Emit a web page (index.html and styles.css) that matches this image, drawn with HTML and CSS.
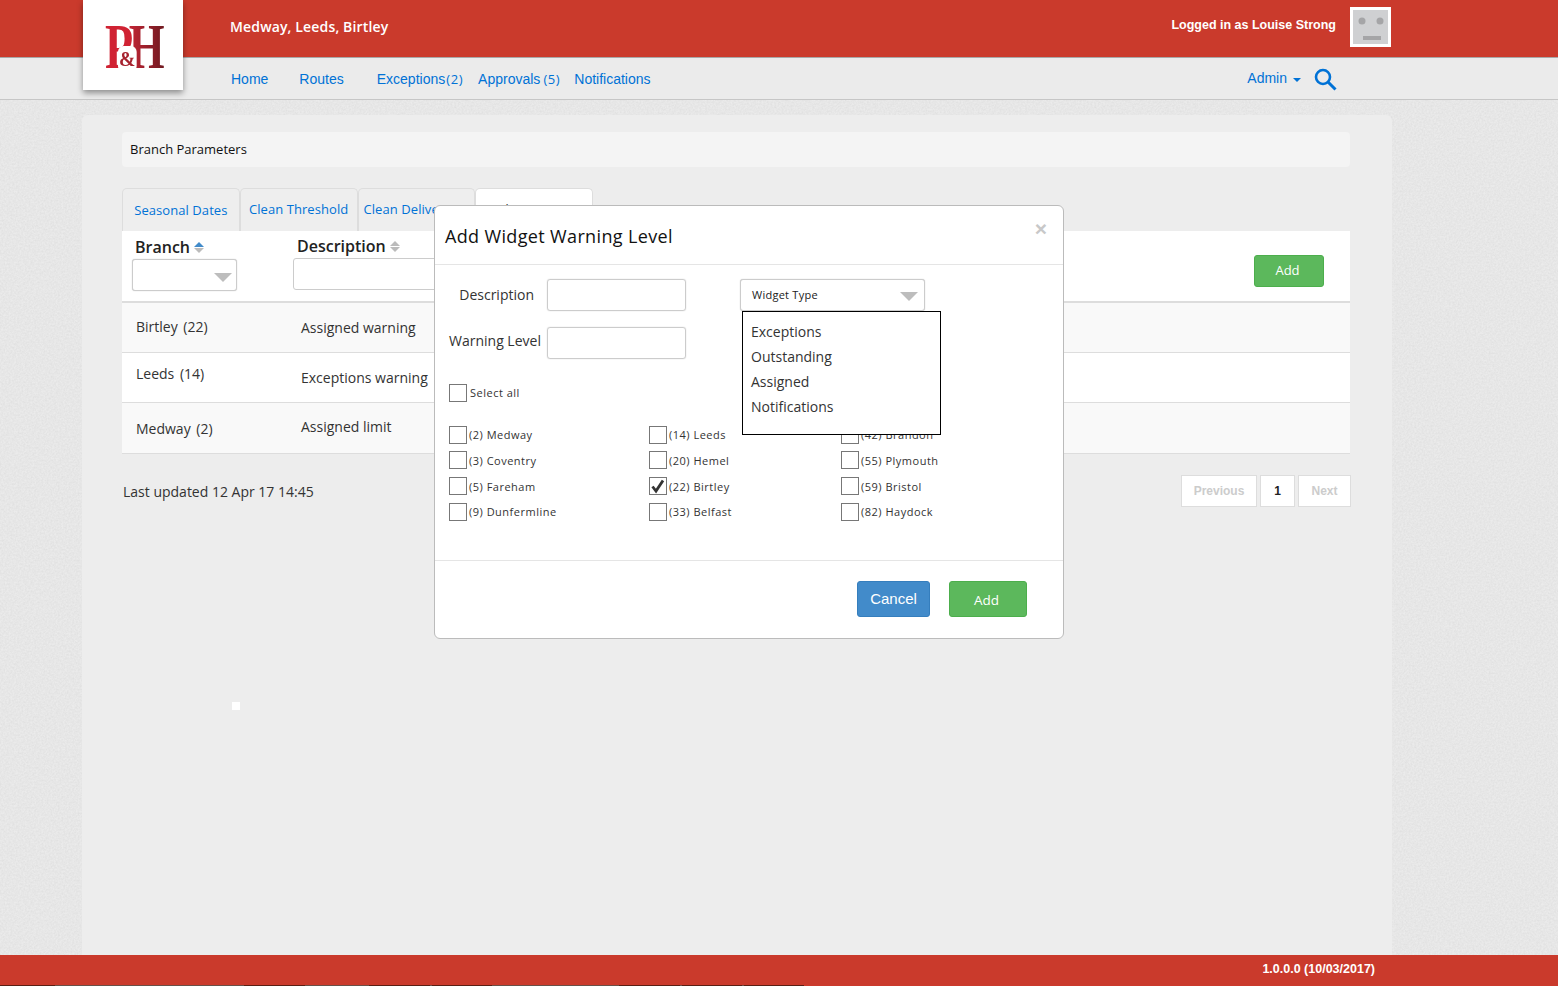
FILE: index.html
```html
<!DOCTYPE html>
<html lang="en">
<head>
<meta charset="utf-8">
<title>Branch Parameters</title>
<link rel="stylesheet" href="styles.css">
</head>
<body>
<div class="page">
  <header class="topbar">
    <div class="logo"><div class="logo-mark"><span class="logo-p">P</span><span class="amp">&amp;</span><span class="logo-h">H</span></div></div>
    <div class="branches">Medway, Leeds, Birtley</div>
    <div class="user">Logged in as Louise Strong</div>
    <div class="avatar">
      <svg width="35" height="34" viewBox="0 0 35 34"><rect width="35" height="34" fill="#cfd0d2"/><circle cx="9" cy="11" r="3.5" fill="#a5a5a7"/><circle cx="27" cy="11" r="3.5" fill="#a5a5a7"/><rect x="10" y="26" width="18" height="4" fill="#a5a5a7"/></svg>
    </div>
  </header>
  <nav class="navbar">
    <a class="nav-link home">Home</a>
    <a class="nav-link routes">Routes</a>
    <a class="nav-link exc">Exceptions<span class="count">(2)</span></a>
    <a class="nav-link appr">Approvals<span class="count gap">(5)</span></a>
    <a class="nav-link">Notifications</a>
    <div class="nav-right">
      <a class="nav-link admin">Admin</a><span class="caret"></span>
      <svg class="search" width="23" height="23" viewBox="0 0 23 23"><circle cx="9" cy="9" r="7" fill="none" stroke="#0072d6" stroke-width="2.6"/><path d="M14 14l7.500 7.500" stroke="#0072d6" stroke-width="3" fill="none"/></svg>
    </div>
  </nav>
  <main class="stage">
    <section class="panel">
      <div class="crumb">Branch Parameters</div>
      <div class="tabs">
        <a class="tab first">Seasonal Dates</a>
        <a class="tab">Clean Threshold</a>
        <a class="tab third">Clean Delivery</a>
        <a class="tab active">Widget Warning</a>
      </div>
      <div class="table">
        <div class="thead">
          <div class="th branch-col">
            <div class="th-title">Branch<span class="sort"><i class="up on"></i><i class="down"></i></span></div>
            <div class="select narrow"><span class="arrow"></span></div>
          </div>
          <div class="th desc-col">
            <div class="th-title">Description<span class="sort"><i class="up"></i><i class="down"></i></span></div>
            <div class="text-filter"></div>
          </div>
          <button class="btn green table-add">Add</button>
        </div>
        <div class="row odd"><span class="c1 t1">Birtley (22)</span><span class="c2 t2">Assigned warning</span></div>
        <div class="row"><span class="c1 t3">Leeds (14)</span><span class="c2 t4">Exceptions warning</span></div>
        <div class="row odd last"><span class="c1 t5">Medway (2)</span><span class="c2 t6">Assigned limit</span></div>
      </div>
      <div class="tfoot">
        <div class="updated">Last updated 12 Apr 17 14:45</div>
        <div class="pager">
          <a class="pg off prev">Previous</a><a class="pg cur">1</a><a class="pg off next">Next</a>
        </div>
      </div>
    </section>
    <span class="speck"></span>
    <div class="modal">
      <div class="modal-head">
        <h2>Add Widget Warning Level</h2>
        <span class="close">×</span>
      </div>
      <div class="modal-body">
        <div class="form-top">
          <div class="fields">
            <label class="field"><span class="lbl d">Description</span><span class="input"></span></label>
            <label class="field"><span class="lbl w">Warning Level</span><span class="input"></span></label>
          </div>
          <div class="select wide">Widget Type<span class="arrow"></span>
            <div class="menu">
              <div>Exceptions</div><div>Outstanding</div><div>Assigned</div><div>Notifications</div>
            </div>
          </div>
        </div>
        <div class="selall"><span class="box"></span>Select all</div>
        <div class="checks">
          <div class="chk"><span class="box"></span>(2) Medway</div>
          <div class="chk"><span class="box"></span>(14) Leeds</div>
          <div class="chk"><span class="box"></span>(42) Brandon</div>
          <div class="chk"><span class="box"></span>(3) Coventry</div>
          <div class="chk"><span class="box"></span>(20) Hemel</div>
          <div class="chk"><span class="box"></span>(55) Plymouth</div>
          <div class="chk"><span class="box"></span>(5) Fareham</div>
          <div class="chk"><span class="box"><svg width="16" height="16" viewBox="0 0 16 16"><path d="M2.500 8.500l3.500 4.500L13 2.500" fill="none" stroke="#333" stroke-width="2.800"/></svg></span>(22) Birtley</div>
          <div class="chk"><span class="box"></span>(59) Bristol</div>
          <div class="chk"><span class="box"></span>(9) Dunfermline</div>
          <div class="chk"><span class="box"></span>(33) Belfast</div>
          <div class="chk"><span class="box"></span>(82) Haydock</div>
        </div>
      </div>
      <div class="modal-foot">
        <button class="btn blue">Cancel</button>
        <button class="btn green big">Add</button>
      </div>
    </div>
  </main>
  <footer class="footer">1.0.0.0 (10/03/2017)</footer>
  <div class="footer-edge"></div>
</div>
</body>
</html>
```
FILE: styles.css
```css
* { box-sizing: border-box; }
html, body { margin: 0; height: 100%; }
body { font-family: "Open Sans", sans-serif; font-size: 13px; color: #222; background-color: #ebebeb; background-image: url("data:image/svg+xml,%3Csvg xmlns='http://www.w3.org/2000/svg' width='320' height='320'%3E%3Cfilter id='n'%3E%3CfeTurbulence type='fractalNoise' baseFrequency='.55' numOctaves='3' stitchTiles='stitch'/%3E%3CfeColorMatrix values='0 0 0 0 .45 0 0 0 0 .45 0 0 0 0 .45 .3 0 0 0 -.07'/%3E%3C/filter%3E%3Crect width='320' height='320' filter='url(%23n)'/%3E%3C/svg%3E"); overflow: hidden; }
a { color: #0072d6; text-decoration: none; }
.page { height: 986px; display: flex; flex-direction: column; }

.topbar { height: 58px; flex: none; background: #ca3a2c; border-bottom: 1px solid #a8a8a8; display: flex; align-items: center; color: #fff; padding-left: 83px; position: relative; z-index: 2; }
.logo { width: 100px; height: 90px; background: #fff; align-self: flex-start; box-shadow: 0 3px 6px rgba(0,0,0,.4); flex: none; padding: 16px 0 0 22px; }
.logo-mark { position: relative; font-family: "Liberation Serif", serif; font-weight: 700; font-size: 64px; line-height: 62px; white-space: nowrap; transform: scaleX(.72); transform-origin: 0 0; width: 90px; display: flex; }
.logo-p { color: #d02233; }
.logo-h { margin-left: -6px; background: linear-gradient(90deg, #c42535, #6e1a20); -webkit-background-clip: text; background-clip: text; color: transparent; }
.amp { position: absolute; left: 18px; top: 30px; font-size: 21px; line-height: 26px; color: #a6222e; transform: scaleX(1.3); transform-origin: 0 0; background: #fff; border-radius: 6px; padding: 0 1px; }
.branches { margin-left: 47px; font-weight: 600; font-size: 14px; letter-spacing: .15px; padding-bottom: 5px; flex: 1; }
.user { font-family: "Liberation Sans", sans-serif; font-weight: 700; font-size: 12.5px; padding-bottom: 7px; margin-right: 14px; }
.avatar { width: 41px; height: 40px; border: 3px solid #fff; margin: 0 167px 4px 0; display: flex; overflow: hidden; }
.avatar svg { display: block; flex: none; }

.navbar { height: 42px; flex: none; background: #ebebeb; border-bottom: 1px solid #c6c6c6; display: flex; align-items: center; padding-left: 231px; font-family: "Liberation Sans", sans-serif; font-size: 14px; }
.nav-link { margin-right: 14px; white-space: nowrap; }
.nav-link.home { margin-right: 31px; }
.nav-link.routes { margin-right: 33px; }
.nav-link.exc { margin-right: 15px; }
.count { font-family: "Open Sans", sans-serif; font-size: 13px; margin-left: 1px; letter-spacing: .6px; }
.count.gap { margin-left: 3px; }
.nav-right { margin-left: auto; display: flex; align-items: center; margin-right: 221px; }
.admin { margin-right: 6px; padding-bottom: 2px; }
.caret { width: 0; height: 0; border: 4px solid transparent; border-top-color: #0072d6; border-bottom: 0; margin-right: 13px; margin-top: 2px; }
.search { display: block; margin-top: 2px; }

.stage { flex: 1; position: relative; padding: 15px 166px 0 82px; min-height: 0; }
.panel { height: 100%; background: #ededed; border-radius: 6px 6px 0 0; padding: 17px 42px 0 40px; }
.crumb { height: 35px; background: #f4f4f4; border-radius: 4px; padding: 0 8px; line-height: 35px; font-size: 13px; color: #111; }

.tabs { display: flex; margin-top: 21px; height: 43px; }
.tab { width: 117.75px; flex: none; border: 1px solid #ddd; border-bottom: 0; border-radius: 5px 5px 0 0; background: #eee; text-align: center; line-height: 41px; white-space: nowrap; font-size: 13px; letter-spacing: .07px; overflow: hidden; }
.tab.first { padding-top: 1px; }
.tab.third { text-align: left; padding-left: 5px; }
.tab.active { background: #fff; color: #333; }

.table { background: #fff; }
.thead { height: 72px; border-bottom: 2px solid #ddd; display: flex; position: relative; padding-left: 10px; }
.th { flex: none; }
.branch-col { width: 161px; padding-top: 5px; }
.desc-col { width: 600px; padding-top: 4px; }
.th-title { font-size: 16px; font-weight: 600; line-height: 22px; color: #222; display: flex; align-items: center; padding-left: 3px; height: 22px; }
.desc-col .th-title { padding-left: 4px; }
.sort { display: inline-flex; flex-direction: column; margin-left: 4px; gap: 1px; }
.sort i { display: block; width: 0; height: 0; border-left: 5px solid transparent; border-right: 5px solid transparent; }
.sort .up { border-bottom: 5px solid #bbb; }
.sort .down { border-top: 5px solid #bbb; }
.sort .up.on { border-bottom-color: #428bca; }
.select { border: 1px solid #ccc; border-radius: 3px; background: #fff; position: relative; box-shadow: 0 0 1px #bbb; }
.select.narrow { width: 105px; height: 32px; margin-top: 1px; }
.arrow { position: absolute; right: 4px; top: 13px; width: 0; height: 0; border-left: 9px solid transparent; border-right: 9px solid transparent; border-top: 9px solid #bdbdbd; }
.text-filter { width: 200px; height: 32px; margin-top: 1px; border: 1px solid #ccc; border-radius: 3px; }
.btn.table-add { position: absolute; left: 1132px; top: 24px; padding: 0 3px 2px 0; }

.row { height: 50px; border-bottom: 1px solid #ddd; display: flex; font-size: 14px; color: #333; background: #fff; }
.row.odd { background: #f9f9f9; }
.row.last { height: 51px; }
.c1 { margin-left: 14px; width: 165px; flex: none; word-spacing: 2px; }
.t1 { padding-top: 14px; }
.t2 { padding-top: 15px; }
.t3 { padding-top: 11px; }
.t4 { padding-top: 15px; }
.t5 { padding-top: 16px; }
.t6 { padding-top: 14px; }

.tfoot { display: flex; justify-content: space-between; margin-top: 21px; }
.updated { font-size: 14px; padding: 7px 0 0 1px; color: #333; }
.pager { display: flex; gap: 3px; margin-right: -1px; font-family: "Liberation Sans", sans-serif; font-size: 12px; font-weight: 700; }
.pg { height: 32px; border: 1px solid #ddd; background: #fff; line-height: 30px; text-align: center; }
.pg.off { color: #ccc; }
.pg.prev { width: 76px; }
.pg.next { width: 53px; }
.pg.cur { color: #222; width: 35px; }

.speck { position: absolute; left: 232px; top: 602px; width: 8px; height: 8px; background: #fff; }

.modal { position: absolute; left: 434px; top: 105px; width: 630px; height: 434px; background: #fff; border: 1px solid #bbb; border-radius: 6px; display: flex; flex-direction: column; }
.modal-head { height: 59px; border-bottom: 1px solid #e5e5e5; position: relative; flex: none; padding: 16px 10px 0; }
.modal-head h2 { margin: 0; font-size: 18px; font-weight: 400; line-height: 28px; letter-spacing: .35px; color: #111; }
.close { position: absolute; right: 16px; top: 11px; font-family: "Liberation Sans", sans-serif; font-weight: 700; font-size: 21px; line-height: 24px; color: #c8c8c8; }
.modal-body { flex: 1; padding: 14px 13px 0 14px; }
.form-top { display: flex; height: 106px; }
.fields { width: 291px; flex: none; }
.field { display: flex; align-items: center; margin-bottom: 16px; height: 32px; }
.lbl { width: 98px; font-size: 14px; text-align: right; color: #333; white-space: nowrap; flex: none; }
.lbl.d { padding: 0 13px 2px 0; }
.lbl.w { padding: 0 7px 5px 0; }
.input { width: 139px; height: 32px; border: 1px solid #ccc; border-radius: 3px; box-shadow: 0 0 1px #bbb; }
.select.wide { width: 185px; height: 32px; font-size: 11px; line-height: 29px; padding-left: 11px; letter-spacing: .25px; color: #222; }
.select.wide .arrow { right: 6px; top: 12px; }
.menu { position: absolute; left: 1px; top: 31px; width: 199px; height: 124px; background: #fff; border: 1px solid #000; padding: 7px 8px 0; z-index: 3; font-size: 14px; letter-spacing: 0; line-height: 25px; color: #333; }
.selall { display: flex; align-items: center; font-size: 11px; letter-spacing: .5px; height: 19px; margin-top: -2px; color: #333; }
.box { width: 18px; height: 18px; flex: none; border: 1px solid #777; margin-right: 2px; display: block; }
.box svg { display: block; }
.selall .box { margin-right: 3px; }
.checks { display: grid; grid-template-columns: 200px 192px 1fr; grid-auto-rows: 25.67px; margin-top: 20px; }
.chk { display: flex; align-items: center; font-size: 11px; letter-spacing: .5px; color: #333; white-space: nowrap; }

.modal-foot { height: 78px; flex: none; border-top: 1px solid #e5e5e5; display: flex; justify-content: flex-end; padding: 20px 36px 0 0; gap: 19px; }
.btn { font-family: "Open Sans", sans-serif; border-radius: 3px; color: #fff; font-size: 13px; border: 1px solid; cursor: pointer; padding: 0; }
.green { background: #5cb85c; border-color: #4cae4c; width: 70px; height: 32px; }
.btn.green.big { width: 78px; height: 36px; padding: 1px 3px 0 0; font-size: 13.500px; }
.btn.blue { background: #428bca; border-color: #357ebd; width: 73px; height: 36px; font-family: "Liberation Sans", sans-serif; font-size: 15px; padding-bottom: 2px; }

.footer { height: 30px; flex: none; background: #ca3a2c; color: #fff; font-family: "Liberation Sans", sans-serif; font-weight: 700; font-size: 12.500px; text-align: right; line-height: 29px; padding-right: 183px; }
.footer-edge { height: 1px; flex: none; background: linear-gradient(90deg, #5a1f14 0 55px, #6a5048 55px 244px, #5a1f14 244px 305px, #6a5048 305px 369px, #5a1f14 369px 430px, #6a5048 430px 432px, #5a1f14 432px 492px, #6a5048 492px 619px, #5a1f14 619px 680px, #6a5048 680px 682px, #5a1f14 682px 742px, #6a5048 742px 744px, #5a1f14 744px 804px, #ca3a2c 804px); }
```
